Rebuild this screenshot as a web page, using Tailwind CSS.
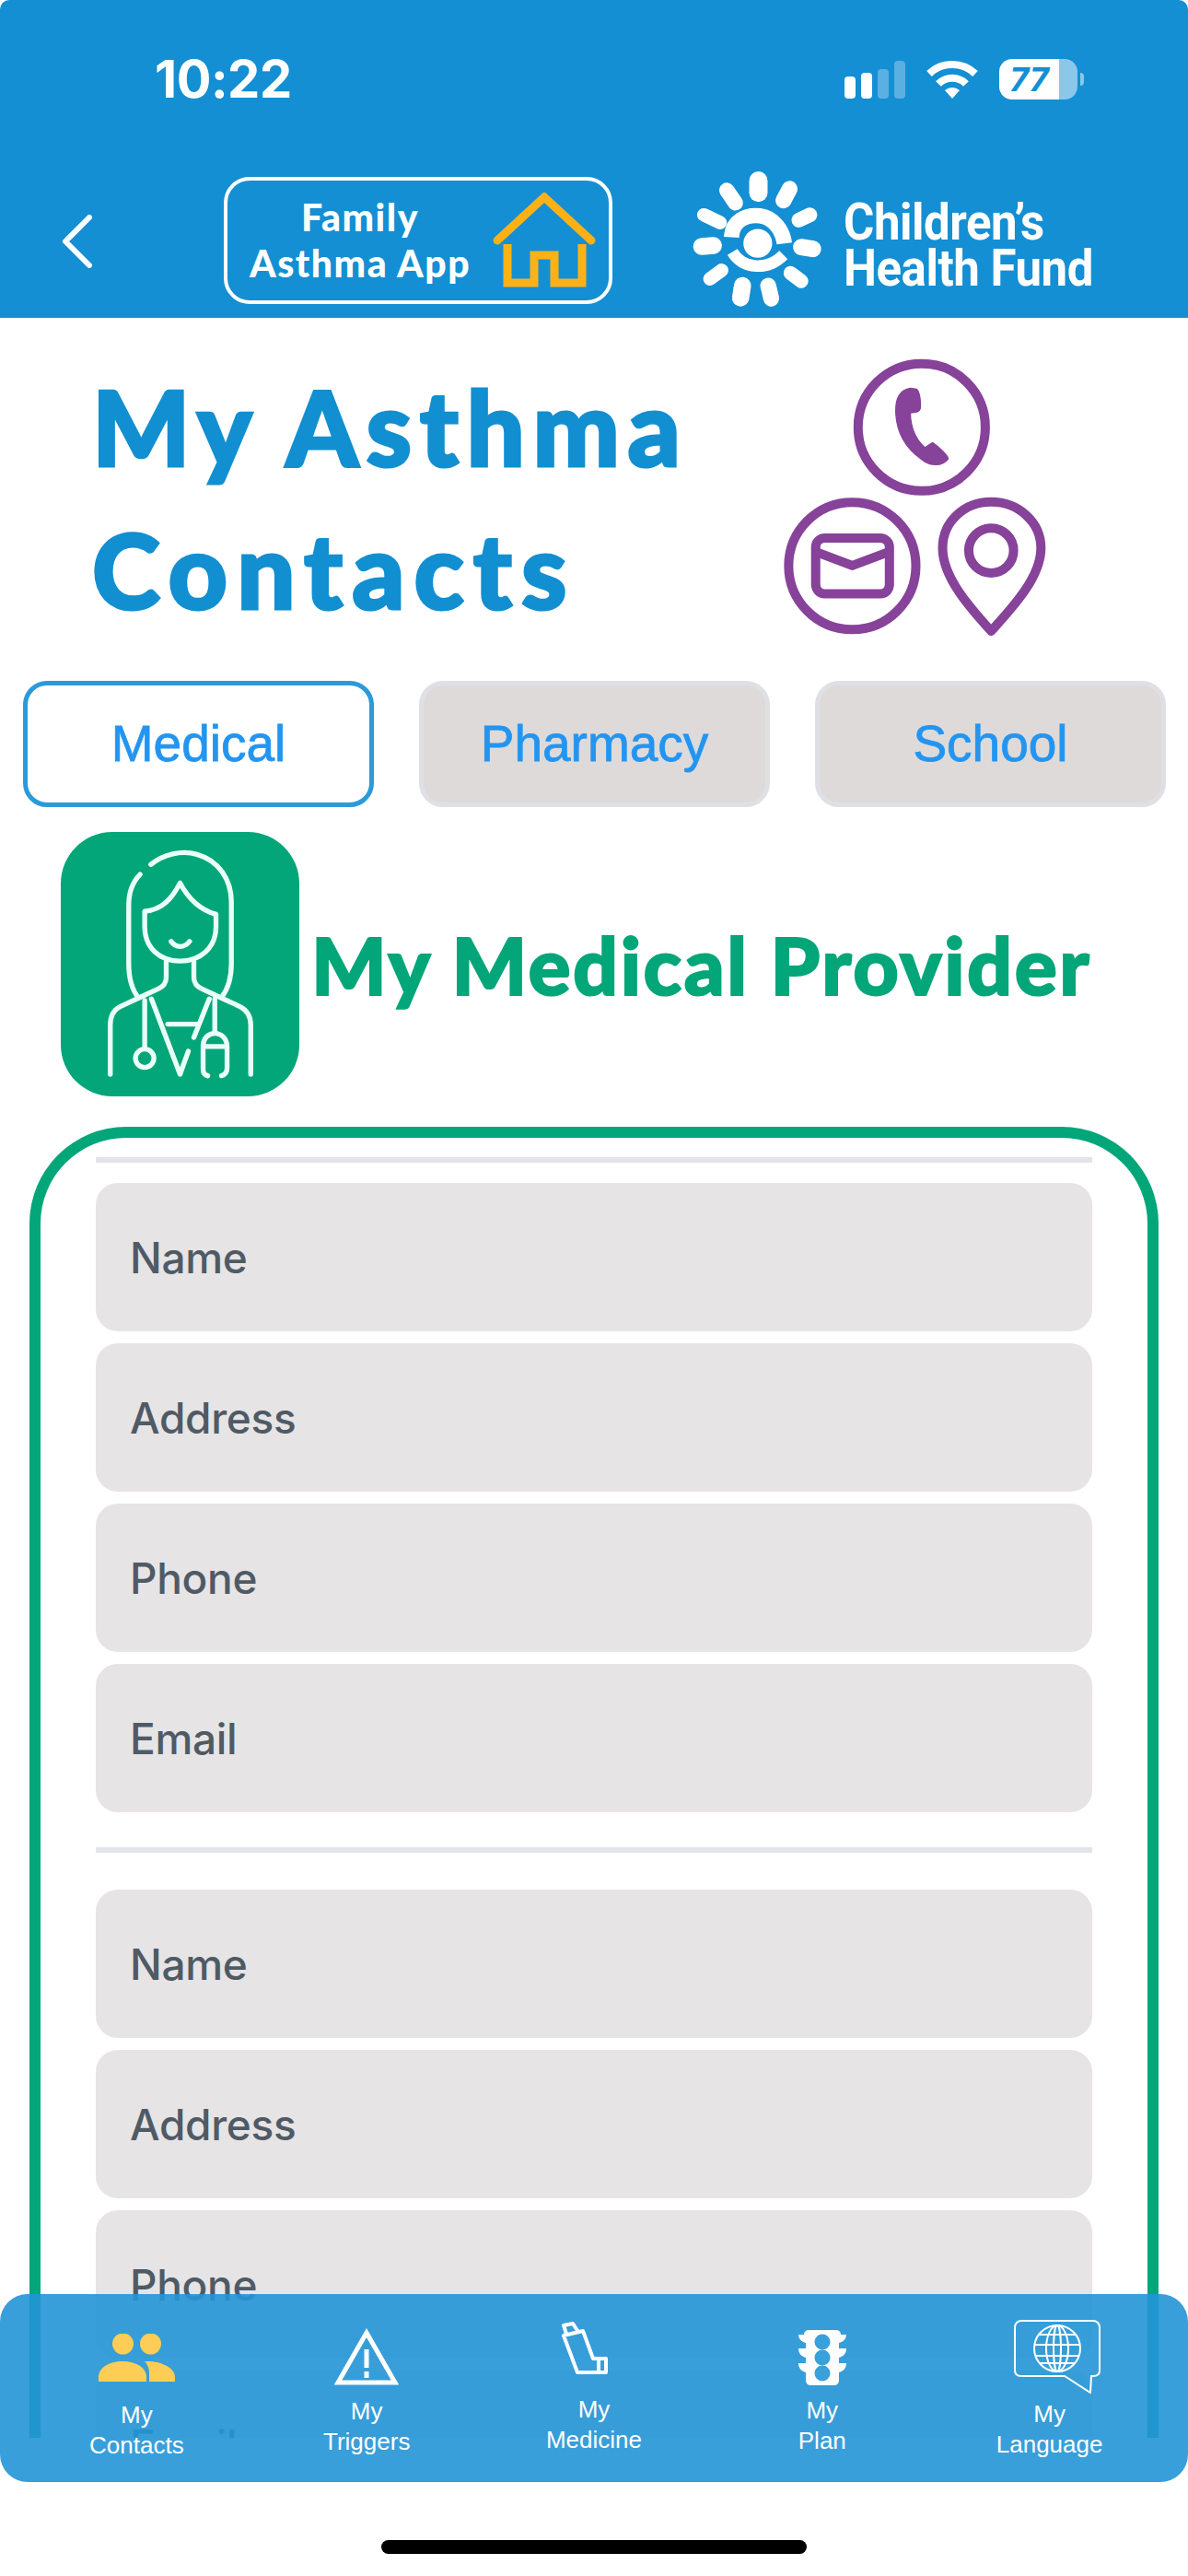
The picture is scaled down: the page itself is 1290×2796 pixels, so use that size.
<!DOCTYPE html>
<html lang="en">
<head>
  <meta charset="UTF-8" />
  <meta name="viewport" content="width=device-width, initial-scale=1" />
  <title>My Asthma Contacts</title>
  <script src="https://cdn.jsdelivr.net/npm/@tailwindcss/browser@4"></script>
</head>
<body class="bg-white font-['Liberation_Sans',sans-serif]">
<div class="relative w-[1290px] h-[2796px] overflow-hidden bg-white">

  <!-- status bar + nav -->
  <header class="h-[345px] bg-[#148fd3] rounded-t-[10px] text-white">
    <div class="h-[184px] flex items-start pt-[64px] pl-[168px] pr-[113px] justify-between">
      <span class="font-['Inter',sans-serif] font-bold text-[56px] leading-[44px] tracking-[-0.5px]">10:22</span>
      <div class="flex items-center gap-[23px] h-[44px]">
        <div class="flex items-end gap-[6px] h-[41px]">
          <span class="w-[12px] h-[24px] rounded-[4px] bg-white"></span>
          <span class="w-[12px] h-[28px] rounded-[4px] bg-white"></span>
          <span class="w-[12px] h-[32px] rounded-[4px] bg-white/30"></span>
          <span class="w-[12px] h-[41px] rounded-[4px] bg-white/30"></span>
        </div>
        <svg width="56" height="42" viewBox="0 0 56 42" fill="none" stroke="white" stroke-width="8">
          <path d="M3 15 A 36 36 0 0 1 53 15" />
          <path d="M13 26 A 21 21 0 0 1 43 26" />
          <path d="M28 42 L20 33 A 12 12 0 0 1 36 33 Z" fill="white" stroke="none" />
        </svg>
        <div class="flex items-center gap-[3px]">
          <div class="flex w-[85px] h-[44px] rounded-[14px] overflow-hidden">
            <div class="w-[65px] bg-white text-[#148fd3] font-['Inter',sans-serif] font-bold italic text-[36px] leading-[44px] text-center">77</div>
            <div class="flex-1 bg-white/50"></div>
          </div>
          <span class="w-[4px] h-[14px] rounded-r-full bg-white/50"></span>
        </div>
      </div>
    </div>

    <div class="flex items-start pl-[67px]">
      <svg class="mt-[49px]" width="33" height="58" viewBox="0 0 33 58" fill="none" stroke="white" stroke-width="6" stroke-linecap="round" stroke-linejoin="round">
        <path d="M30 3 L4 29 L30 55" />
      </svg>
      <div class="ml-[143px] mt-[8px] w-[422px] h-[138px] border-[4px] border-white rounded-[28px] flex items-center pl-[22px] gap-[22px]">
        <div class="w-[244px] text-center font-['Lato',sans-serif] font-black text-[41px] leading-[50px] tracking-[1.500px] whitespace-nowrap">Family<br />Asthma App</div>
        <svg width="112" height="104" viewBox="535 208 112 104" fill="none" stroke="#fdb117" stroke-width="9" stroke-linecap="round">
          <path d="M540 260 L591 213 L642 260" />
          <path d="M551 264 V306 H580 V276 H602 V306 H632 V264" stroke-linecap="butt" />
        </svg>
      </div>
      <svg class="ml-[87px]" width="143" height="152" viewBox="95 100 430 455" fill="none" stroke="white" stroke-linecap="round">
        <path d="M310 135 L310 175" stroke-width="60" />
        <path d="M412 162 L392 200" stroke-width="52" />
        <path d="M478 247 L442 264" stroke-width="48" />
        <path d="M488 358 L450 352" stroke-width="54" />
        <path d="M450 463 L415 437" stroke-width="46" />
        <path d="M352 520 L342 478" stroke-width="52" />
        <path d="M252 518 L258 478" stroke-width="56" />
        <path d="M152 456 L190 428" stroke-width="44" />
        <path d="M125 350 L163 347" stroke-width="56" />
        <path d="M132 247 L185 272" stroke-width="44" />
        <path d="M207 167 L235 208" stroke-width="50" />
        <path d="M222 320 C 225 265 270 245 315 250 C 360 255 390 300 395 340" stroke-width="50" stroke-linecap="butt" />
        <path d="M225 368 C 260 425 340 430 392 378" stroke-width="38" stroke-linecap="butt" />
        <circle cx="308" cy="340" r="47" fill="white" stroke="none" />
      </svg>
      <div class="ml-[21px] mt-[32px] origin-left scale-x-[0.91] font-['Roboto',sans-serif] font-bold text-[56px] leading-[50px] tracking-[-0.5px] whitespace-nowrap">Children’s<br />Health Fund</div>
    </div>
  </header>

  <!-- title -->
  <section class="flex items-start pt-[40px] pl-[100px] mb-[44px]">
    <h1 class="w-[750px] font-['Lato',sans-serif] font-black text-[112px] leading-[155px] tracking-[8.500px] text-[#128fd1] [-webkit-text-stroke:3px_#128fd1]">My Asthma<br /><span class="tracking-[10px]">Contacts</span></h1>
    <svg class="mt-[3px]" width="287" height="302" viewBox="90 55 860 905" fill="none" stroke="#87429a" stroke-width="30" stroke-linejoin="round" stroke-linecap="round">
      <circle cx="542" cy="282" r="207" />
      <path d="M505 155 C 470 160 455 190 458 240 C 462 300 490 350 540 385 C 570 410 610 410 628 385 C 630 375 590 340 578 332 C 570 335 560 345 552 348 C 525 325 505 285 505 235 C 520 235 535 232 537 222 C 540 200 535 165 525 158 Z" fill="#87429a" stroke-width="4" />
      <circle cx="316" cy="733" r="207" />
      <rect x="197" y="642" width="240" height="182" rx="30" />
      <path d="M205 690 L316 732 L428 690" />
      <path d="M768 945 C 700 870 610 770 610 675 C 610 590 680 525 768 525 C 856 525 930 590 930 675 C 930 770 836 870 768 945 Z" />
      <circle cx="768" cy="683" r="73" />
    </svg>
  </section>

  <!-- tabs -->
  <nav class="flex pl-[25px] gap-[49px] text-[#2395f1] text-[55px] [-webkit-text-stroke:0.8px_#2395f1]">
    <button class="w-[381px] h-[137px] rounded-[26px] border-[5px] border-[#2c9ad9] bg-white">Medical</button>
    <button class="w-[381px] h-[137px] rounded-[26px] border-[5px] border-[#dfe0e5] bg-[#dedada]">Pharmacy</button>
    <button class="w-[381px] h-[137px] rounded-[26px] border-[5px] border-[#dfe0e5] bg-[#dedada]">School</button>
  </nav>

  <!-- provider heading -->
  <div class="flex items-center pl-[66px] pt-[27px]">
    <svg class="rounded-[56px] bg-[#03a678]" width="259" height="287" viewBox="78 72 774 860" fill="none" stroke="#eafff8" stroke-width="16" stroke-linecap="round" stroke-linejoin="round">
      <path d="M370 178 C 410 145 470 130 520 145 C 590 165 632 225 632 300 L632 500 C632 550 620 585 600 610" />
      <path d="M335 210 C 310 235 298 270 298 310 L298 500 C298 550 308 585 330 612" />
      <path d="M465 238 C 440 285 410 325 350 330 L350 380 C350 450 400 492 465 492 C 530 492 582 450 582 380 L582 340 C 530 325 490 285 465 238 Z" />
      <path d="M436 428 C 450 450 480 450 496 428" />
      <path d="M420 495 L420 545 C420 565 410 575 395 582 L330 612 L270 640 C 250 650 238 670 238 700 L238 860" />
      <path d="M510 495 L510 545 C510 565 520 575 535 582 L600 612 L660 640 C680 650 695 670 695 700 L695 860" />
      <path d="M372 615 L465 860 L492 785" />
      <path d="M560 615 L510 740" />
      <path d="M425 697 L520 697" />
      <path d="M350 620 L350 775" />
      <circle cx="350" cy="808" r="30" />
      <path d="M578 615 L578 725" />
      <path d="M555 865 C540 860 540 850 540 840 L540 770 C540 740 560 727 578 727 C 600 727 618 745 618 770 L618 840 C618 855 610 862 600 865" />
      <path d="M545 770 L612 770" />
    </svg>
    <h2 class="ml-[13px] font-['Lato',sans-serif] font-black text-[86px] leading-[100px] tracking-[2.500px] text-[#03a678] [-webkit-text-stroke:2px_#03a678] whitespace-nowrap">My Medical Provider</h2>
  </div>

  <!-- form -->
  <div class="ml-[32px] mt-[33px] w-[1226px] h-[1423px] overflow-hidden border-x-[12px] border-t-[12px] border-[#03a678] rounded-t-[105px] px-[60px] pt-[21px]">
    <div class="h-[6px] bg-[#e3e3ea] mb-[22px]"></div>
    <div class="flex flex-col gap-[13px]">
      <input placeholder="Name" class="w-full h-[161px] shrink-0 rounded-[24px] bg-[#e6e4e5] px-[37px] font-['Inter',sans-serif] font-medium text-[46px] tracking-[-0.3px] placeholder:text-[#4f5a65]" />
      <input placeholder="Address" class="w-full h-[161px] shrink-0 rounded-[24px] bg-[#e6e4e5] px-[37px] font-['Inter',sans-serif] font-medium text-[46px] tracking-[-0.3px] placeholder:text-[#4f5a65]" />
      <input placeholder="Phone" class="w-full h-[161px] shrink-0 rounded-[24px] bg-[#e6e4e5] px-[37px] font-['Inter',sans-serif] font-medium text-[46px] tracking-[-0.3px] placeholder:text-[#4f5a65]" />
      <input placeholder="Email" class="w-full h-[161px] shrink-0 rounded-[24px] bg-[#e6e4e5] px-[37px] font-['Inter',sans-serif] font-medium text-[46px] tracking-[-0.3px] placeholder:text-[#4f5a65]" />
    </div>
    <div class="h-[6px] bg-[#e3e3ea] mt-[38px] mb-[40px]"></div>
    <div class="flex flex-col gap-[13px]">
      <input placeholder="Name" class="w-full h-[161px] shrink-0 rounded-[24px] bg-[#e6e4e5] px-[37px] font-['Inter',sans-serif] font-medium text-[46px] tracking-[-0.3px] placeholder:text-[#4f5a65]" />
      <input placeholder="Address" class="w-full h-[161px] shrink-0 rounded-[24px] bg-[#e6e4e5] px-[37px] font-['Inter',sans-serif] font-medium text-[46px] tracking-[-0.3px] placeholder:text-[#4f5a65]" />
      <input placeholder="Phone" class="w-full h-[161px] shrink-0 rounded-[24px] bg-[#e6e4e5] px-[37px] font-['Inter',sans-serif] font-medium text-[46px] tracking-[-0.3px] placeholder:text-[#4f5a65]" />
      <input placeholder="Email" class="w-full h-[161px] shrink-0 rounded-[24px] bg-[#e6e4e5] px-[37px] font-['Inter',sans-serif] font-medium text-[46px] tracking-[-0.3px] placeholder:text-[#4f5a65]" />
    </div>
  </div>

  <!-- bottom tab bar, sits over the form -->
  <div class="absolute left-0 top-[2490px] w-[1290px] h-[204px] rounded-[30px] bg-[#2295d6]/90 grid grid-cols-5 px-[28px] text-white text-[26px] leading-[33px] text-center">
    <div class="flex flex-col items-center pt-[43px] pr-[6px]">
      <svg width="83" height="52" viewBox="107 2533 83 52" fill="#fdcd56">
        <circle cx="133.500" cy="2544" r="11.500" />
        <circle cx="163.500" cy="2544" r="11.500" />
        <path d="M107 2585 V2580 C107 2570 118 2563 133 2563 C148 2563 159 2570 159 2580 V2585 Z" />
        <path d="M162 2585 V2576 C162 2570 160 2566 157 2563 C175 2562 190 2570 190 2580 V2585 Z" />
      </svg>
      <span class="mt-[20px]">My<br />Contacts</span>
    </div>
    <div class="flex flex-col items-center pt-[37px]">
      <svg width="70" height="62" viewBox="0 0 70 62" fill="none" stroke="white" stroke-width="5">
        <path d="M35 5 L66 59 H4 Z" />
        <path d="M35 23 V43 M35 47 V54" />
      </svg>
      <span class="mt-[12px]">My<br />Triggers</span>
    </div>
    <div class="flex flex-col items-center pt-[30px]">
      <svg class="-ml-[22px]" width="52" height="58" viewBox="0 0 52 58" fill="none" stroke="white" stroke-width="4" stroke-linejoin="round">
        <path d="M4 15 L25 10 L36 40 H50 V55 H19 Z" />
        <path d="M7 13 L4 4 L14 2 L20 11" />
        <path d="M42 41 V54" />
      </svg>
      <span class="mt-[21px]">My<br />Medicine</span>
    </div>
    <div class="flex flex-col items-center pt-[39px] pl-[2px]">
      <svg width="52" height="60" viewBox="0 0 52 60">
        <path fill="white" d="M12 0 H40 C44 0 46 2 46 5 H52 C52 10 48 13 44 14 V20 H52 C52 26 48 29 44 30 V36 H52 C52 42 48 45 44 46 V54 C44 58 42 60 38 60 H14 C10 60 8 58 8 54 V46 C4 45 0 42 0 36 H8 V30 C4 29 0 26 0 20 H8 V14 C4 13 0 10 0 5 H6 C6 2 8 0 12 0 Z" />
        <circle cx="26" cy="13" r="8.500" fill="#38a0da" />
        <circle cx="26" cy="30" r="8.500" fill="#38a0da" />
        <circle cx="26" cy="47" r="8.500" fill="#38a0da" />
      </svg>
      <span class="mt-[11px]">My<br />Plan</span>
    </div>
    <div class="flex flex-col items-center pt-[28px] pl-[2px]">
      <svg class="ml-[16px]" width="94" height="80" viewBox="0 0 94 80" fill="none" stroke="white" stroke-width="2">
        <path d="M8 1 H86 C90 1 93 4 93 8 V55 C93 59 90 61 86 61 H84 L83 79 L55 61 H8 C4 61 1 59 1 55 V8 C1 4 4 1 8 1 Z" />
        <circle cx="47" cy="31" r="25" />
        <ellipse cx="47" cy="31" rx="12" ry="25" />
        <ellipse cx="47" cy="31" rx="4" ry="25" />
        <path d="M27 16 H67 M22 27 H72 M23 39 H71 M28 47 H66" />
      </svg>
      <span class="mt-[6px]">My<br />Language</span>
    </div>
  </div>

  <!-- home indicator -->
  <div class="absolute left-[414px] top-[2757px] w-[462px] h-[15px] rounded-full bg-black"></div>
</div>
</body>
</html>
